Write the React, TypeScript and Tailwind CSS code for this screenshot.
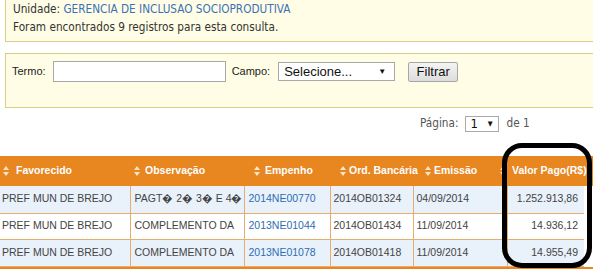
import React from "react"

const tahoma = "font-['DejaVu_Sans_Condensed','DejaVu_Sans',sans-serif]"
const arial = "font-['Liberation_Sans',Arial,sans-serif]"

const rows = [
  { fav: "PREF MUN DE BREJO", obs: "PAGT\uFFFD 2\uFFFD 3\uFFFD E 4\uFFFD", emp: "2014NE00770", ob: "2014OB01324", em: "04/09/2014", val: "1.252.913,86" },
  { fav: "PREF MUN DE BREJO", obs: "COMPLEMENTO DA", emp: "2013NE01044", ob: "2014OB01434", em: "11/09/2014", val: "14.936,12" },
  { fav: "PREF MUN DE BREJO", obs: "COMPLEMENTO DA", emp: "2013NE01078", ob: "2014OB01418", em: "11/09/2014", val: "14.955,49" },
]

const headers = [
  { label: "Favorecido", w: "w-[134px] pl-[3px]", gap: "gap-[7px]" },
  { label: "Observação", w: "w-[120px]", gap: "gap-[5px]" },
  { label: "Empenho", w: "w-[86px]", gap: "gap-[5px]" },
  { label: "Ord. Bancária", w: "w-[85px]", gap: "gap-[3px]" },
  { label: "Emissão", w: "w-[75px]", gap: "gap-[3px]" },
  { label: "Valor Pago(R$)", w: "w-[100px]", gap: "gap-[6px]" },
]

function SortIcon() {
  return (
    <svg width="6" height="12" viewBox="0 0 6 12" className="shrink-0">
      <polygon points="3,1 6,5 0,5" fill="#fbe3c4" />
      <polygon points="0,7 6,7 3,11" fill="#fbe3c4" />
    </svg>
  )
}

export default function App() {
  return (
    <div className={`relative w-[593px] h-[270px] overflow-hidden bg-white ${arial}`}>
      {/* unidade */}
      <div className={`ml-[5px] w-[600px] h-[42px] bg-[#fffde6] border-l border-b border-[#d8cf86] pl-[7px] ${tahoma} text-[11.7px] text-[#333] leading-[18px]`}>
        <div>
          Unidade: <span className="text-[#3b72b5]">GERENCIA DE INCLUSAO SOCIOPRODUTIVA</span>
        </div>
        <div>Foram encontrados 9 registros para esta consulta.</div>
      </div>

      {/* filtro */}
      <div className="mt-[11px] ml-[5px] w-[600px] h-[55px] bg-[#fffde6] border border-[#d8cf86] pl-[6px] pt-[7px]">
        <div className="flex items-center h-[21px] text-[11px] text-[#222]">
          <span>Termo:</span>
          <input className="ml-[7px] w-[173px] h-[21px] bg-white border border-[#a9a9a9] outline-none" />
          <span className="ml-[6px]">Campo:</span>
          <div className="ml-[8px] w-[117px] h-[19px] bg-white border border-[#a9a9a9] flex items-center justify-between pl-[5px] pr-[8px] text-[13px] text-[#111]">
            <span>Selecione...</span>
            <span className="text-[8px]">▼</span>
          </div>
          <button className="ml-[13px] w-[50px] h-[20px] border border-[#a7a7a7] rounded-[2px] bg-gradient-to-b from-[#f4f4f4] to-[#dddddd] text-[13px] text-[#111] leading-none">
            Filtrar
          </button>
        </div>
      </div>

      {/* paginacao */}
      <div className={`flex items-center h-[16px] mt-[8px] pl-[420px] ${tahoma} text-[11.7px] text-[#555]`}>
        <span>Página:</span>
        <div className="ml-[6px] w-[34px] h-[16px] border border-[#a9a9a9] bg-white flex items-center justify-between px-[5px] text-[13px] text-[#111]">
          <span>1</span>
          <span className="text-[7px]">▼</span>
        </div>
        <span className="ml-[8px]">de 1</span>
      </div>

      {/* tabela */}
      <div className="mt-[24px] w-[600px]">
        <div className="flex items-center h-[30px] bg-[#e8861f] text-white font-bold text-[10.5px]">
          {headers.map((h) => (
            <div key={h.label} className={`flex items-center shrink-0 whitespace-nowrap ${h.w} ${h.gap}`}>
              <SortIcon />
              <span>{h.label}</span>
            </div>
          ))}
        </div>
        <table className="table-fixed border-collapse w-[584px] text-[10.5px] text-[#444]">
          <colgroup>
            <col className="w-[130px]" />
            <col className="w-[114px]" />
            <col className="w-[86px]" />
            <col className="w-[83px]" />
            <col className="w-[94px]" />
            <col className="w-[77px]" />
          </colgroup>
          <tbody>
            {rows.map((r, i) => (
              <tr key={i} className={`${i % 2 === 0 ? "h-[27px] bg-[#e9f1fb]" : "h-[26px] bg-white"} border-b border-[#e6ad6c]`}>
                <td className="pl-[2px] whitespace-nowrap overflow-hidden border-r border-[#e6ad6c]">{r.fav}</td>
                <td className="pl-[4px] whitespace-nowrap overflow-hidden border-r border-[#e6ad6c]">{r.obs}</td>
                <td className="pl-[4px] whitespace-nowrap overflow-hidden border-r border-[#e6ad6c] text-[#2d6db4]">{r.emp}</td>
                <td className="pl-[3px] whitespace-nowrap overflow-hidden border-r border-[#e6ad6c]">{r.ob}</td>
                <td className="pl-[3px] whitespace-nowrap overflow-hidden border-r border-[#e6ad6c]">{r.em}</td>
                <td className="pr-[6px] text-right whitespace-nowrap overflow-hidden">{r.val}</td>
              </tr>
            ))}
          </tbody>
        </table>
        <div className="h-[2px] w-[600px] bg-[#e8861f]" />
      </div>

      {/* destaque */}
      <div className="absolute left-[502px] top-[143px] w-[90px] h-[125px] border-[5px] border-black rounded-[20px]" />
    </div>
  )
}
